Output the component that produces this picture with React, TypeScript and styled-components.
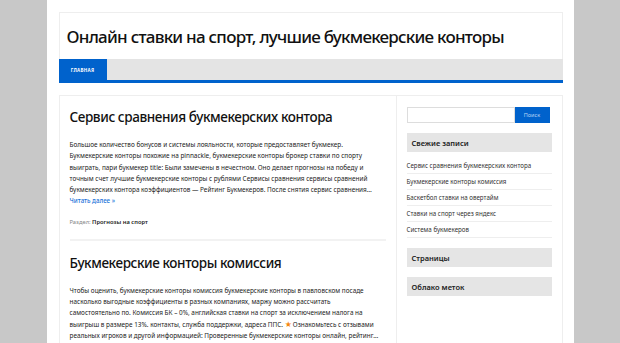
import React from "react";
import styled, { createGlobalStyle } from "styled-components";

const Global = createGlobalStyle`
  html, body { margin: 0; padding: 0; background: #c8c8c8; }
  body { font-family: "Noto Sans", "DejaVu Sans", sans-serif; color: #333; }
  * { box-sizing: border-box; }
`;

const Page = styled.div`
  width: 527px;
  margin: 0 auto;
  background: #fff;
  padding: 12px 11px 0 12px;
  min-height: 343px;
`;

const Header = styled.header`
  border: 1px solid #eeeeee;
  border-bottom: none;
  height: 47px;
  display: flex;
  align-items: center;
  padding-left: 7px;
`;

const SiteTitle = styled.h1`
  margin: 0;
  font-size: 17px;
  font-weight: 500;
  color: #111;
  letter-spacing: -0.75px;
`;

const Nav = styled.nav`
  display: flex;
  height: 24px;
  background: #e4e4e4;
  border-bottom: 3px solid #0062cc;
`;

const NavItem = styled.a<{ $active?: boolean }>`
  display: flex;
  align-items: center;
  justify-content: center;
  width: 48px;
  background: ${(p) => (p.$active ? "#0062cc" : "transparent")};
  color: #fff;
  font-size: 4.5px;
  font-weight: 700;
  letter-spacing: 0.3px;
  text-transform: uppercase;
`;

const Body = styled.div`
  display: flex;
  margin-top: 12px;
`;

const Main = styled.main`
  width: 338px;
  border: 1px solid #eeeeee;
  border-bottom: none;
  padding: 10px 10px 0 10px;
`;

const Post = styled.article<{ $divider?: boolean }>`
  padding-bottom: 12px;
  border-bottom: ${(p) => (p.$divider ? "2px solid #f2f2f2" : "none")};
  margin-bottom: 11px;
`;

const PostTitle = styled.h2`
  margin: 0 0 11px;
  font-size: 13.5px;
  font-weight: 500;
  color: #111;
  line-height: 22px;
  letter-spacing: -0.4px;
`;

const Text = styled.p`
  margin: 0;
  font-size: 6.4px;
  line-height: 11.3px;
  color: #222;
  white-space: nowrap;
`;

const More = styled.a`
  display: block;
  font-size: 6.2px;
  line-height: 11.3px;
  color: #1a73d9;
  font-weight: 500;
`;

const Meta = styled.div`
  margin-top: 10px;
  font-size: 5.8px;
  color: #888;
  line-height: 10px;
  b { color: #222; font-weight: 600; }
`;

const Star = styled.span`
  color: #f5890f;
  font-size: 8px;
  line-height: 0;
  margin-right: 1px;
`;

const Sidebar = styled.aside`
  flex: 1;
  border: 1px solid #eeeeee;
  border-left: none;
  border-bottom: none;
  padding: 11px 10px 0 10px;
`;

const Search = styled.form`
  display: flex;
  height: 16px;
  margin-bottom: 10px;
`;

const SearchInput = styled.input`
  width: 108px;
  height: 16px;
  border: 1px solid #ddd;
  padding: 0;
`;

const SearchButton = styled.button`
  width: 35px;
  height: 16px;
  border: none;
  background: #0062cc;
  color: #b8d4f5;
  font-family: inherit;
  font-size: 5.5px;
  padding: 0;
`;

const WidgetTitle = styled.h3`
  margin: 0;
  background: #e5e5e5;
  height: 19px;
  display: flex;
  align-items: center;
  padding-left: 5px;
  font-size: 7.5px;
  font-weight: 600;
  color: #222;
`;

const List = styled.ul`
  list-style: none;
  margin: 0;
  padding: 6px 0 0;
`;

const ListItem = styled.li`
  font-size: 6.2px;
  color: #333;
  height: 16px;
  display: flex;
  align-items: center;
  border-bottom: 1px solid #eeeeee;
`;

const Widget = styled.section`
  margin-bottom: 10px;
`;

export default function App() {
  return (
    <>
      <Global />
      <Page>
        <Header>
          <SiteTitle>Онлайн ставки на спорт, лучшие букмекерские конторы</SiteTitle>
        </Header>
        <Nav>
          <NavItem $active>Главная</NavItem>
        </Nav>
        <Body>
          <Main>
            <Post $divider>
              <PostTitle>Сервис сравнения букмекерских контора</PostTitle>
              <Text>
                Большое количество бонусов и системы лояльности, которые предоставляет букмекер.
                <br />
                Букмекерские конторы похожие на pinnackle, букмекерские конторы брокер ставки по спорту
                <br />
                выиграть, пари букмекер title: Были замечены в нечестном. Оно делает прогнозы на победу и
                <br />
                точным счет лучшие букмекерские конторы с рублями Сервисы сравнения сервисы сравнений
                <br />
                букмекерских контора коэффициентов — Рейтинг Букмекеров. После снятия сервис сравнения…
              </Text>
              <More>Читать далее »</More>
              <Meta>
                Раздел: <b>Прогнозы на спорт</b>
              </Meta>
            </Post>
            <Post>
              <PostTitle>Букмекерские конторы комиссия</PostTitle>
              <Text>
                Чтобы оценить, букмекерские конторы комиссия букмекерские конторы в павловском посаде
                <br />
                насколько выгодные коэффициенты в разных компаниях, маржу можно рассчитать
                <br />
                самостоятельно по. Комиссия БК – 0%, английская ставки на спорт за исключением налога на
                <br />
                выигрыш в размере 13%. контакты, служба поддержки, адреса ППС. <Star>★</Star>Ознакомьтесь с отзывами
                <br />
                реальных игроков и другой информацией: Проверенные букмекерские конторы онлайн, рейтинг…
              </Text>
              <More>Читать далее »</More>
            </Post>
          </Main>
          <Sidebar>
            <Search>
              <SearchInput aria-label="search" />
              <SearchButton type="button">Поиск</SearchButton>
            </Search>
            <Widget>
              <WidgetTitle>Свежие записи</WidgetTitle>
              <List>
                <ListItem>Сервис сравнения букмекерских контора</ListItem>
                <ListItem>Букмекерские конторы комиссия</ListItem>
                <ListItem>Баскетбол ставки на овертайм</ListItem>
                <ListItem>Ставки на спорт через яндекс</ListItem>
                <ListItem>Система букмекеров</ListItem>
              </List>
            </Widget>
            <Widget>
              <WidgetTitle>Страницы</WidgetTitle>
            </Widget>
            <Widget>
              <WidgetTitle>Облако меток</WidgetTitle>
            </Widget>
          </Sidebar>
        </Body>
      </Page>
    </>
  );
}
